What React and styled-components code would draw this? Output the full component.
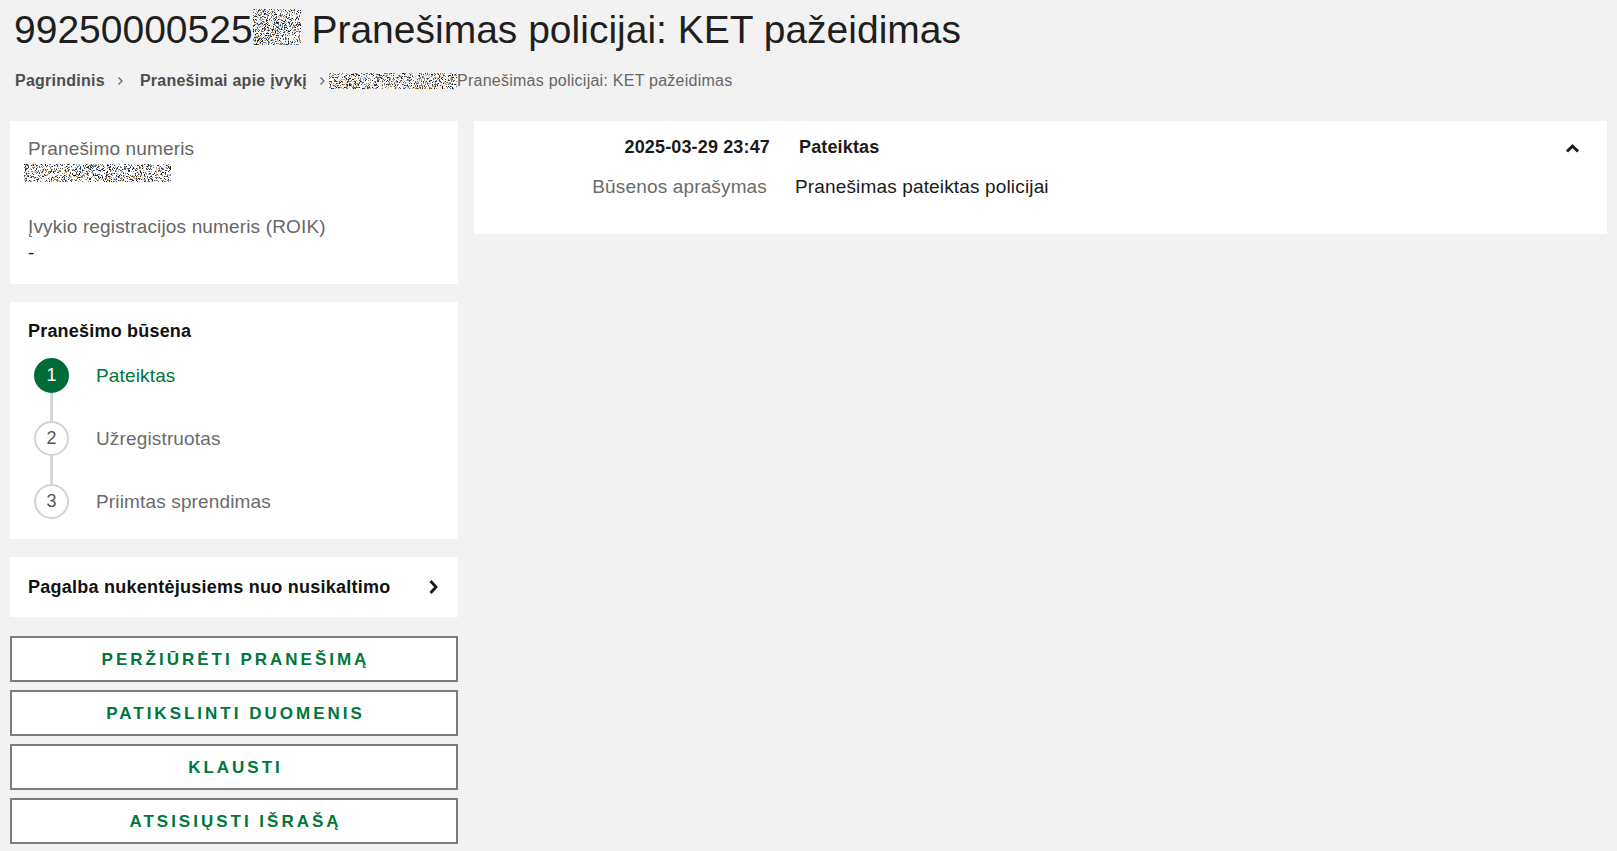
import React from 'react'
import styled, { createGlobalStyle } from 'styled-components'

const GlobalStyle = createGlobalStyle`
  body {
    margin: 0;
    background: #f2f2f2;
    font-family: 'Liberation Sans', Arial, sans-serif;
    color: #1f1f1f;
  }
`

const Page = styled.div`
  padding: 8px 10px 0;
`

const Title = styled.h1`
  margin: 0 0 0 4px;
  font-size: 39px;
  font-weight: 400;
  line-height: 44px;
  color: #1f1f1f;
`

const Crumbs = styled.nav`
  display: flex;
  align-items: center;
  margin: 19px 0 0 5px;
  height: 19px;
  font-size: 16px;
  letter-spacing: 0.25px;
  color: #4d4d4d;
`

const Crumb = styled.span`
  font-weight: ${(p) => (p.$current ? 400 : 700)};
  color: ${(p) => (p.$current ? '#666' : '#4d4d4d')};
  display: inline-flex;
  align-items: center;
`

const Sep = styled.span`
  display: inline-flex;
  margin: 0 ${(p) => p.$after}px 0 ${(p) => p.$before}px;
  color: #555;
`

const Layout = styled.div`
  display: grid;
  grid-template-columns: 448px 1fr;
  column-gap: 16px;
  align-items: start;
  margin-top: 31px;
`

const Side = styled.div`
  display: flex;
  flex-direction: column;
`

const Card = styled.section`
  background: #fff;
  padding: ${(p) => p.$pad || '17px 18px 20px'};
  margin-bottom: ${(p) => p.$mb ?? 18}px;
`

const Field = styled.div`
  & + & {
    margin-top: 29px;
  }
`

const Label = styled.div`
  font-size: 19px;
  line-height: 22px;
  letter-spacing: 0.15px;
  color: #666;
`

const Value = styled.div`
  font-size: 19px;
  line-height: 22px;
  margin-top: 4px;
  color: #1f1f1f;
  display: flex;
  align-items: center;
`

const CardTitle = styled.h2`
  margin: 0;
  font-size: 18px;
  line-height: 21px;
  font-weight: 700;
  letter-spacing: 0.2px;
  color: #111;
`

const Steps = styled.ol`
  list-style: none;
  margin: 16px 0 0 6px;
  padding: 0;
`

const Step = styled.li`
  display: flex;
  align-items: center;
  gap: 27px;
`

const Circle = styled.span`
  box-sizing: border-box;
  width: 35px;
  height: 35px;
  border-radius: 50%;
  display: flex;
  align-items: center;
  justify-content: center;
  font-size: 18px;
  background: ${(p) => (p.$active ? '#006b38' : '#fff')};
  border: 2px solid ${(p) => (p.$active ? '#006b38' : '#d3d3d3')};
  color: ${(p) => (p.$active ? '#fff' : '#555')};
`

const StepLabel = styled.span`
  font-size: 19px;
  letter-spacing: 0.15px;
  color: ${(p) => (p.$active ? '#00763b' : '#6b6b6b')};
`

const Connector = styled.div`
  width: 3px;
  height: 28px;
  margin-left: 16px;
  background: #d6d6d6;
`

const HelpCard = styled.a`
  display: flex;
  align-items: center;
  justify-content: space-between;
  height: 60px;
  padding: 0 20px 0 18px;
  margin-bottom: 19px;
  background: #fff;
  font-size: 18px;
  font-weight: 700;
  letter-spacing: 0.25px;
  color: #111;
  text-decoration: none;
`

const Buttons = styled.div`
  display: flex;
  flex-direction: column;
  gap: 8px;
`

const Button = styled.button`
  height: 46px;
  width: 100%;
  border: 2px solid #7b7b7b;
  background: #fff;
  color: #00763b;
  font-family: 'Liberation Sans', Arial, sans-serif;
  font-size: 17px;
  font-weight: 700;
  letter-spacing: 3px;
  padding: 1px 0 0 3px;
  text-transform: uppercase;
  cursor: pointer;
`

const HistoryCard = styled.section`
  background: #fff;
  display: grid;
  grid-template-columns: 296px 1fr auto;
  column-gap: 25px;
  row-gap: 18px;
  align-items: center;
  padding: 16px 27px 36px 0;
`

const Cell = styled.div`
  font-size: ${(p) => (p.$bold ? 18 : 19)}px;
  font-weight: ${(p) => (p.$bold ? 700 : 400)};
  line-height: ${(p) => (p.$bold ? 21 : 22)}px;
  letter-spacing: 0.15px;
  text-align: ${(p) => (p.$right ? 'right' : 'left')};
  padding-right: ${(p) => p.$pr || 0}px;
  padding-left: ${(p) => p.$pl || 0}px;
  color: ${(p) => (p.$muted ? '#6b6b6b' : '#1a1a1a')};
`

const Toggle = styled.span`
  display: flex;
  margin-top: 1px;
`

// pixel noise used for the redacted bits
const Noise = ({ w, h, seed, align = 0 }) => {
  let s = seed
  const rand = () => {
    s = (s * 16807) % 2147483647
    return s / 2147483647
  }
  const colors = ['#1a1a1a', '#3d3d3d', '#777', '#a8a8a8', '#3b6fb0', '#c58a3c', '#ddd']
  const cells = []
  for (let y = 0; y < h; y++) {
    for (let x = 0; x < w; x++) {
      const r = rand()
      if (r < 0.42) {
        cells.push(
          <rect key={x + '-' + y} x={x} y={y} width="1" height="1" fill={colors[Math.floor(rand() * colors.length)]} />
        )
      } else if (r < 0.6) {
        cells.push(<rect key={x + '-' + y} x={x} y={y} width="1" height="1" fill="#fff" />)
      }
    }
  }
  return (
    <svg width={w} height={h} style={{ verticalAlign: align }} shapeRendering="crispEdges">
      {cells}
    </svg>
  )
}

const Chevron = ({ dir }) =>
  dir === 'up' ? (
    <svg width="15" height="10" viewBox="0 0 15 10">
      <polyline points="2,8.5 7.5,3 13,8.5" fill="none" stroke="#1a1a1a" strokeWidth="3" />
    </svg>
  ) : dir === 'right' ? (
    <svg width="10" height="16" viewBox="0 0 10 16">
      <polyline points="2.5,2 8,8 2.5,14" fill="none" stroke="#1a1a1a" strokeWidth="2.8" />
    </svg>
  ) : (
    <svg width="7" height="10" viewBox="0 0 7 10">
      <polyline points="1.5,1.5 5,5 1.5,8.5" fill="none" stroke="#666" strokeWidth="1.3" />
    </svg>
  )

const steps = ['Pateiktas', 'Užregistruotas', 'Priimtas sprendimas']

const actions = ['Peržiūrėti pranešimą', 'Patikslinti duomenis', 'Klausti', 'Atsisiųsti išrašą']

export default function App() {
  return (
    <Page>
      <GlobalStyle />
      <Title>
        99250000525
        <Noise w={48} h={36} seed={11} align={-2} /> Pranešimas policijai: KET pažeidimas
      </Title>
      <Crumbs>
        <Crumb>Pagrindinis</Crumb>
        <Sep $before={12} $after={16}>
          <Chevron />
        </Sep>
        <Crumb>Pranešimai apie įvykį</Crumb>
        <Sep $before={12} $after={3}>
          <Chevron />
        </Sep>
        <Crumb $current>
          <Noise w={128} h={16} seed={7} />
          Pranešimas policijai: KET pažeidimas
        </Crumb>
      </Crumbs>

      <Layout>
        <Side>
          <Card>
            <Field>
              <Label>Pranešimo numeris</Label>
              <Value>
                <span style={{ marginLeft: -4 }}>
                  <Noise w={147} h={18} seed={23} />
                </span>
              </Value>
            </Field>
            <Field>
              <Label>Įvykio registracijos numeris (ROIK)</Label>
              <Value>-</Value>
            </Field>
          </Card>

          <Card $pad="19px 18px 20px">
            <CardTitle>Pranešimo būsena</CardTitle>
            <Steps>
              {steps.map((step, i) => (
                <React.Fragment key={step}>
                  {i > 0 && <Connector />}
                  <Step>
                    <Circle $active={i === 0}>{i + 1}</Circle>
                    <StepLabel $active={i === 0}>{step}</StepLabel>
                  </Step>
                </React.Fragment>
              ))}
            </Steps>
          </Card>

          <HelpCard href="#">
            Pagalba nukentėjusiems nuo nusikaltimo
            <Chevron dir="right" />
          </HelpCard>

          <Buttons>
            {actions.map((a) => (
              <Button key={a}>{a}</Button>
            ))}
          </Buttons>
        </Side>

        <HistoryCard>
          <Cell $bold $right>
            2025-03-29 23:47
          </Cell>
          <Cell $bold $pl={4}>
            Pateiktas
          </Cell>
          <Toggle>
            <Chevron dir="up" />
          </Toggle>
          <Cell $right $muted $pr={3}>
            Būsenos aprašymas
          </Cell>
          <Cell>Pranešimas pateiktas policijai</Cell>
          <span />
        </HistoryCard>
      </Layout>
    </Page>
  )
}
